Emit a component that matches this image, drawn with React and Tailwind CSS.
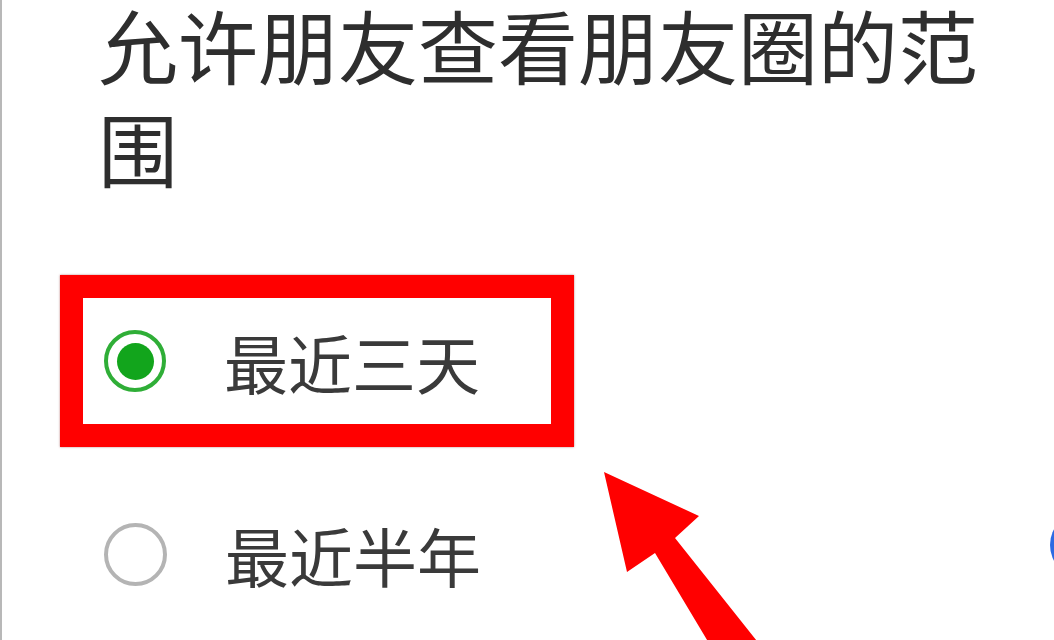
import React from 'react';

const options = [
  { label: '最近三天', checked: true },
  { label: '最近半年', checked: false },
];

function Radio({ checked }) {
  if (checked) {
    return (
      <div className="w-[62px] h-[62px] shrink-0 rounded-full border-[4px] border-[#2fae37] flex items-center justify-center">
        <div className="w-[37px] h-[37px] rounded-full bg-[#12a51c]" />
      </div>
    );
  }
  return <div className="w-[63px] h-[63px] shrink-0 rounded-full border-[4px] border-[#b4b4b4]" />;
}

function OptionRow({ label, checked }) {
  return (
    <div className="flex items-center gap-[58px]">
      <Radio checked={checked} />
      <span className="text-[64px] leading-none text-[#3a3a3a]">{label}</span>
    </div>
  );
}

export default function App() {
  return (
    <div
      className="relative w-[1054px] h-[640px] overflow-hidden bg-white border-l-[2px] border-[#b8b8b8]"
      style={{ fontFamily: '"Noto Sans CJK SC", "Noto Sans", sans-serif' }}
    >
      {/* heading */}
      <div className="ml-[96px] mt-[-8px] w-[920px] text-[80px] leading-[103px] text-[#2e2e2e]">
        允许朋友查看朋友圈的范围
      </div>

      {/* highlighted option */}
      <div className="ml-[58px] mt-[77px] w-[514px] h-[172px] border-[23px] border-[#ff0000] flex items-center pl-[21px] shadow-[0_0_2px_rgba(120,0,0,0.5)]">
        <OptionRow {...options[0]} />
      </div>

      {/* second option */}
      <div className="ml-[102px] mt-[75px]">
        <OptionRow {...options[1]} />
      </div>

      {/* annotation arrow */}
      <svg className="absolute left-0 top-0" width="1054" height="640" viewBox="0 0 1054 640">
        <polygon
          points="602,472 697,516 673,538 770,660 735,690 653,553 625,572"
          fill="#ff0000"
        />
      </svg>

      {/* blue button edge peeking in */}
      <div className="absolute left-[1048px] top-[512px] w-[68px] h-[66px] rounded-full bg-[#2c6be3]" />
    </div>
  );
}
